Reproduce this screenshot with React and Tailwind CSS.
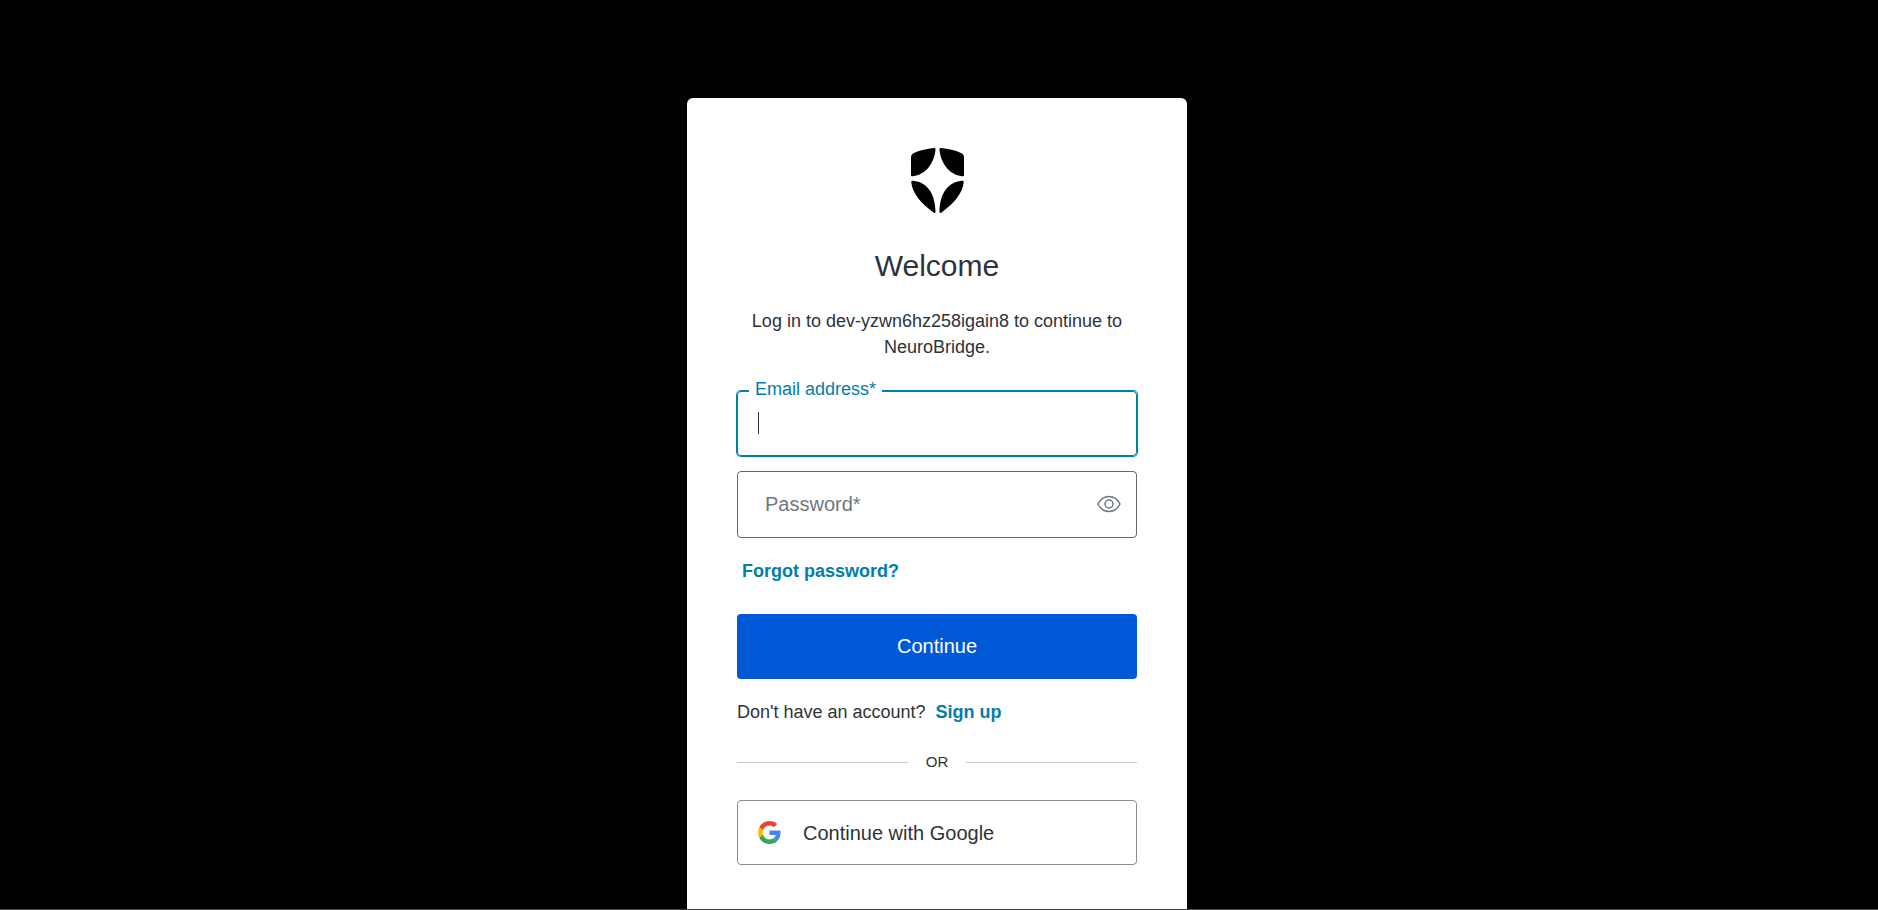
import React, { useState } from 'react'

function ShieldLogo() {
  return (
    <svg viewBox="0 0 53 65" className="h-[65px] w-[53px]" role="img" aria-label="dev-yzwn6hz258igain8">
      <path d="M23 .1C24.1 0 24.6.6 24.5 1.6 23.5 15 14.5 27 2 28.3.8 28.5 0 28.2 0 27V9.5C0 7.3 1 6 3 5 9 2.2 16 .7 23 .1Z" />
      <path d="M30 .1C28.9 0 28.4.6 28.5 1.6 29.5 15 38.5 27 51 28.3 52.2 28.5 53 28.2 53 27V9.5C53 7.3 52 6 50 5 44 2.2 37 .7 30 .1Z" />
      <path d="M.3 34.4C.1 33 1 32.5 2.5 32.7 16 34.3 24 45 24.5 63 24.5 65 24 65.4 22.6 64.4 10 55.5 1.5 45 .3 34.4Z" />
      <path d="M52.7 34.4C52.9 33 52 32.5 50.5 32.7 37 34.3 29 45 28.5 63 28.5 65 29 65.4 30.4 64.4 43 55.5 51.5 45 52.7 34.4Z" />
    </svg>
  )
}

function EyeIcon() {
  return (
    <svg viewBox="0 0 24 18" className="h-[18px] w-6" fill="none" stroke="currentColor" strokeWidth="1.5">
      <path d="M1 9C3.5 4 7.5 1.5 12 1.5S20.5 4 23 9c-2.5 5-6.5 7.5-11 7.5S3.5 14 1 9Z" strokeLinejoin="round" />
      <circle cx="12" cy="9" r="4" />
    </svg>
  )
}

function GoogleIcon() {
  return (
    <svg viewBox="0 0 48 48" className="size-[23px]" aria-hidden="true">
      <path fill="#EA4335" d="M24 9.5c3.54 0 6.71 1.22 9.21 3.6l6.85-6.85C35.9 2.38 30.47 0 24 0 14.62 0 6.51 5.38 2.56 13.22l7.98 6.19C12.43 13.72 17.74 9.5 24 9.5z" />
      <path fill="#4285F4" d="M46.98 24.55c0-1.57-.15-3.09-.38-4.55H24v9.02h12.94c-.58 2.96-2.26 5.48-4.78 7.18l7.73 6c4.51-4.18 7.09-10.36 7.09-17.65z" />
      <path fill="#FBBC05" d="M10.53 28.59c-.48-1.45-.76-2.99-.76-4.59s.27-3.14.76-4.59l-7.98-6.19C.92 16.46 0 20.12 0 24c0 3.88.92 7.54 2.56 10.78l7.97-6.19z" />
      <path fill="#34A853" d="M24 48c6.48 0 11.93-2.13 15.89-5.81l-7.73-6c-2.15 1.45-4.92 2.3-8.16 2.3-6.26 0-11.57-4.22-13.47-9.91l-7.98 6.19C6.51 42.62 14.62 48 24 48z" />
    </svg>
  )
}

export default function App() {
  const [email, setEmail] = useState('')
  const [password, setPassword] = useState('')
  const [showPassword, setShowPassword] = useState(false)

  return (
    <div className="flex min-h-screen flex-col items-center border-b border-[#444] bg-black pt-[98px] pr-5 pl-4 font-['Liberation_Sans',Arial,sans-serif] text-lg/[26px] text-[#2d333a]">
      <main className="w-full max-w-[500px] grow rounded-t-[6px] bg-white px-[50px] pt-[50px] pb-11">
        {/* Header */}
        <header className="flex flex-col items-center text-center">
          <ShieldLogo />
          <h1 className="mt-[30px] mb-5 text-[30px]/[45px]">Welcome</h1>
          <p>Log in to dev-yzwn6hz258igain8 to continue to NeuroBridge.</p>
        </header>

        {/* Login form */}
        <form className="mt-[31px]" onSubmit={(e) => e.preventDefault()}>
          <div className="relative">
            <input
              id="email"
              type="email"
              value={email}
              onChange={(e) => setEmail(e.target.value)}
              className="block h-[65px] w-full rounded-[4px] border border-[#007ead] px-5 text-xl text-[#2d333a] ring-1 ring-[#007ead] outline-none"
            />
            <label htmlFor="email" className="absolute -top-[15px] left-3 bg-white px-[6px] text-[#007ead]">
              Email address*
            </label>
            {!email && <span className="pointer-events-none absolute top-[21px] left-[21px] h-[22px] w-px bg-[#2d333a]" />}
          </div>

          <div className="relative mt-[15px]">
            <input
              id="password"
              type={showPassword ? 'text' : 'password'}
              value={password}
              onChange={(e) => setPassword(e.target.value)}
              className="block h-[67px] w-full rounded-[4px] border border-[#65676e] pr-14 pl-7 text-xl text-[#2d333a] outline-none"
            />
            {!password && (
              <label htmlFor="password" className="absolute top-5 left-7 text-xl/[26px] text-[#6f7780]">
                Password*
              </label>
            )}
            <button
              type="button"
              aria-label="Show password"
              onClick={() => setShowPassword(!showPassword)}
              className="absolute inset-y-0 right-4 flex items-center pb-[2px] text-[#6f7780]"
            >
              <EyeIcon />
            </button>
          </div>

          <a href="#" className="mt-5 ml-[5px] inline-block align-top font-bold text-[#007ead]">
            Forgot password?
          </a>

          <button type="submit" className="mt-[30px] block h-[65px] w-full rounded-[4px] bg-[#0059d6] pb-[2px] text-xl text-white">
            Continue
          </button>
        </form>

        <p className="mt-5">
          Don't have an account?
          <a href="#" className="ml-[10px] font-bold text-[#007ead]">
            Sign up
          </a>
        </p>

        {/* Divider */}
        <div className="mt-[27px] mb-7 flex items-center gap-[18px] text-[15px]/5">
          <span className="h-px grow bg-[#c2c8d0]" />
          OR
          <span className="h-px grow bg-[#c2c8d0]" />
        </div>

        <button type="button" className="flex h-[65px] w-full items-center gap-[22px] rounded-[4px] border border-[#8c8c8f] px-5 text-xl">
          <GoogleIcon />
          Continue with Google
        </button>
      </main>
    </div>
  )
}
